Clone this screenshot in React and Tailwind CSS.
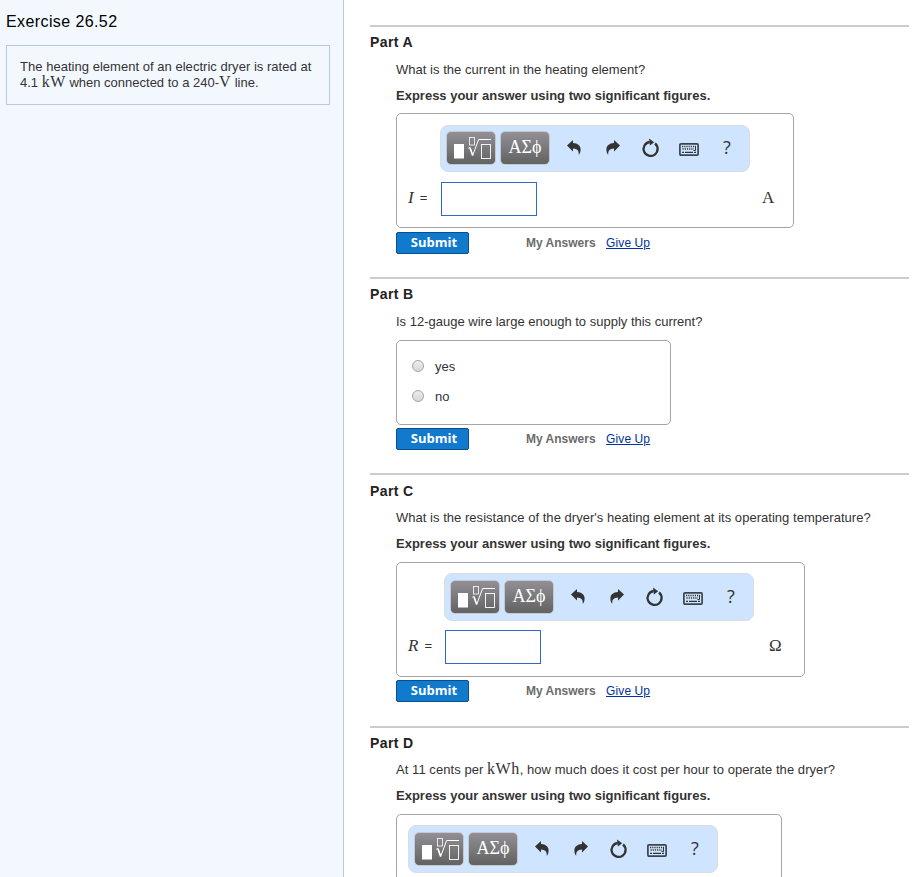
import React, { useState } from 'react';

// --- Toolbar icons ---
function TemplateIcon() {
  return (
    <svg width="50" height="34" viewBox="0 0 50 34" fill="none" stroke="#fff">
      <rect x="8" y="13" width="10" height="14.5" fill="#fff" stroke="none" />
      <rect x="23.5" y="6.5" width="5" height="7.5" strokeWidth="0.8" />
      <path d="M22.3 17.3l1.800-.9 2.600 8L32.600 8.500H45" strokeWidth="1" />
      <path d="M24 17l2.700 7.500" strokeWidth="1.600" />
      <rect x="35.5" y="13.5" width="9" height="14" strokeWidth="0.9" />
    </svg>
  );
}

function UndoIcon({ flipped }) {
  return (
    <svg
      width="14"
      height="15"
      viewBox="0 0 14 15"
      fill="#333"
      className={flipped ? '-scale-x-100' : ''}
    >
      <path d="M0 5.400L6 0v3c4.800.2 7.600 2.800 7.600 6.400 0 2.400-.7 4.200-1.900 5.400.5-3.800-1.400-6-5.700-6.200v2.900z" />
    </svg>
  );
}

function ResetIcon() {
  return (
    <svg width="18" height="20" viewBox="0 0 18 20" fill="none">
      <path d="M14 5.500A7 7 0 1 1 8.600 4" stroke="#333" strokeWidth="2.300" />
      <path d="M8 .5l5.200 3.700L8.900 7.500z" fill="#333" />
    </svg>
  );
}

function KeyboardIcon() {
  return (
    <svg width="20" height="13" viewBox="0 0 20 13" fill="none">
      <rect x="0.9" y="0.9" width="18.2" height="11.2" rx="1" stroke="#3c444d" strokeWidth="1.7" />
      <path d="M3 3.500h14" stroke="#333" strokeWidth="1.300" strokeDasharray="1.200 1" />
      <path d="M3.500 6h11.500" stroke="#333" strokeWidth="1.300" strokeDasharray="1.200 1" />
      <path d="M16.500 3v4.500h-2" stroke="#333" />
      <path d="M3 9.300h2M6 9.300h8M15 9.300h2" stroke="#333" strokeWidth="1.300" />
    </svg>
  );
}

function Toolbar({ className }) {
  return (
    <div
      className={`flex w-[310px] shrink-0 items-start rounded-lg border border-[#d9dde2] bg-[#cfe5ff] pl-[5px] ${className}`}
    >
      <button className="h-[34px] w-[50px] shrink-0 rounded-[5px] border border-[#c8c8cc] bg-linear-to-b from-[#929096] to-[#626262]">
        <span className="-m-px block">
          <TemplateIcon />
        </span>
      </button>
      <button className="ml-1 h-[34px] w-[50px] shrink-0 rounded-[5px] border border-[#c8c8cc] bg-linear-to-b from-[#929096] to-[#626262] pb-[3px] font-['Liberation_Serif',serif] text-[18px] leading-[28px] text-white">
        ΑΣϕ
      </button>
      <button className="mt-[9px] ml-[17px] shrink-0">
        <UndoIcon />
      </button>
      <button className="mt-[9px] ml-[25px] shrink-0">
        <UndoIcon flipped />
      </button>
      <button className="mt-[7px] ml-[21px] shrink-0">
        <ResetIcon />
      </button>
      <button className="mt-[12px] ml-[20px] shrink-0">
        <KeyboardIcon />
      </button>
      <button className="mt-[5px] ml-[24px] shrink-0 font-['Open_Sans',sans-serif] text-[18px] leading-[22px] text-[#333]">
        ?
      </button>
    </div>
  );
}

// --- Submit row under every answer box ---
function Actions({ className = 'leading-[22px]' }) {
  return (
    <div className={`flex h-[22px] items-center ${className}`}>
      <button className="h-[22px] w-[73px] rounded-[2px] border border-[#0a4f8a] bg-[#117acc] pb-[2px] pl-[3px] font-['Open_Sans',sans-serif] text-[13px] leading-[18px] font-bold tracking-normal text-white">
        Submit
      </button>
      <span className="ml-[57px] text-[12px] font-bold tracking-normal text-[#6b6b6b]">My Answers</span>
      <a href="#" className="ml-[10.5px] text-[12px] tracking-[0.1px] text-[#003399] underline">
        Give Up
      </a>
    </div>
  );
}

function MathText({ children }) {
  return (
    <span className="font-['Liberation_Serif',serif] text-[16px] leading-[0] tracking-[0.5px]">{children}</span>
  );
}

function Part({ title, className, children }) {
  return (
    <section className={`border-t-2 border-[#ccc] ${className}`}>
      <h2 className="mt-[7px] h-4 text-[14px] leading-4 font-bold tracking-[0.4px] text-[#222]">{title}</h2>
      <div className="pl-[26px]">{children}</div>
    </section>
  );
}

function Hint() {
  return (
    <p className="mt-[10px] h-4 leading-4 font-bold tracking-normal">
      Express your answer using two significant figures.
    </p>
  );
}

function AnswerRow({ symbol, unit, className, labelWidth, unitMargin }) {
  const [value, setValue] = useState('');

  return (
    <div className={`flex h-[34px] items-center ${className}`}>
      <label className={`pb-[2px] pl-[11px] ${labelWidth}`}>
        <i className="font-['Liberation_Serif',serif] text-[17px]">{symbol}</i>
        <span className="ml-[6px] align-[1px]">=</span>
      </label>
      <input
        className="h-[34px] w-[96px] border border-[#3366cc] px-2 outline-none"
        value={value}
        onChange={(e) => setValue(e.target.value)}
      />
      <span className={`pb-[2px] font-['Liberation_Serif',serif] text-[17px] ${unitMargin}`}>{unit}</span>
    </div>
  );
}

function Choice({ label, value, onChange }) {
  return (
    <label className="flex h-[30px] items-center">
      <input
        type="radio"
        name="gauge"
        checked={value === label}
        onChange={() => onChange(label)}
        className="size-3 appearance-none rounded-full border border-[#a5a5a5] bg-linear-to-b from-[#ededed] to-[#d8d8d8] checked:border-4 checked:border-[#555]"
      />
      <span className="ml-[11px] pt-[2px]">{label}</span>
    </label>
  );
}

export default function App() {
  const [choice, setChoice] = useState('');

  return (
    <div className="flex h-[877px] w-[914px] overflow-hidden bg-white font-['Liberation_Sans',Arial,sans-serif] text-[13px] leading-4 tracking-[0.03px] text-[#333]">
      {/* Problem statement */}
      <aside className="w-[344px] shrink-0 border-r border-[#bfcad6] bg-[#f3f8ff] pt-[12px] pl-[6px]">
        <h1 className="h-5 text-[16px] leading-5 tracking-[0.4px] text-black">Exercise 26.52</h1>
        <div className="mt-[13px] h-[60px] w-[324px] border border-[#b5cadb] pt-[13px] pl-[13px]">
          <p className="h-4 whitespace-nowrap">The heating element of an electric dryer is rated at</p>
          <p className="h-4 tracking-normal whitespace-nowrap">
            4.1 <MathText>kW</MathText> when connected to a 240-<MathText>V</MathText> line.
          </p>
        </div>
      </aside>

      {/* Questions */}
      <main className="w-[565px] shrink-0 pt-[25px] pl-[26px]">
        <Part title="Part A" className="h-[252px]">
          <p className="mt-[12px] h-4">What is the current in the heating element?</p>
          <Hint />
          <div className="mt-[9px] mb-1 h-[115px] w-[398px] rounded-[5px] border border-[#a5a5a5] pt-[11px]">
            <div className="pl-[43px]">
              <Toolbar className="h-[47px] pt-[5px]" />
            </div>
            <AnswerRow symbol="I" unit="A" className="mt-[10px]" labelWidth="w-[44px]" unitMargin="ml-[225px]" />
          </div>
          <Actions />
        </Part>

        <Part title="Part B" className="h-[196px]">
          <p className="mt-[12px] h-4 tracking-normal">Is 12-gauge wire large enough to supply this current?</p>
          <div className="mt-[10px] mb-[3px] h-[85px] w-[275px] rounded-[5px] border border-[#a5a5a5] pt-[10px] pl-[15px]">
            <Choice label="yes" value={choice} onChange={setChoice} />
            <Choice label="no" value={choice} onChange={setChoice} />
          </div>
          <Actions />
        </Part>

        <Part title="Part C" className="h-[253px] pt-px">
          <p className="mt-[11px] h-4">What is the resistance of the dryer's heating element at its operating temperature?</p>
          <Hint />
          <div className="mt-[10px] mb-[3px] h-[115px] w-[409px] rounded-[5px] border border-[#a5a5a5] pt-[10px]">
            <div className="pl-[47px]">
              <Toolbar className="h-[48px] pt-[6px]" />
            </div>
            <AnswerRow symbol="R" unit="Ω" className="mt-[9px]" labelWidth="w-[48px]" unitMargin="ml-[228px]" />
          </div>
          <Actions className="leading-[24px]" />
        </Part>

        <Part title="Part D" className="h-[253px]">
          <p className="mt-[11px] h-4 tracking-[0.06px]">
            At 11 cents per <MathText>kWh</MathText>, how much does it cost per hour to operate the dryer?
          </p>
          <Hint />
          <div className="mt-[10px] h-[115px] w-[386px] rounded-[5px] border border-[#a5a5a5] pt-[10px] pl-[11px]">
            <Toolbar className="h-[48px] pt-[6px]" />
          </div>
        </Part>
      </main>
    </div>
  );
}
